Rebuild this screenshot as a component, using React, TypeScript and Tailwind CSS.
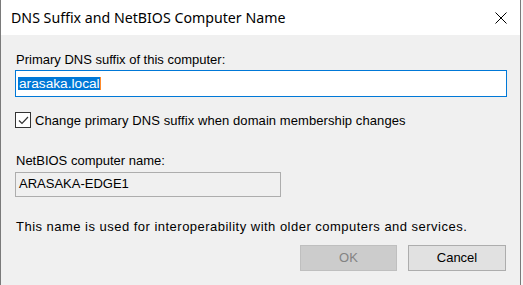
import React from "react"

const CloseIcon: React.FC = () => (
  <svg width="12" height="12" viewBox="0 0 12 12" className="block">
    <path d="M0.5 0.5 L11.5 11.5 M11.5 0.5 L0.5 11.5" stroke="#000" strokeWidth="1" fill="none" />
  </svg>
)

const CheckMark: React.FC = () => (
  <svg width="13" height="13" viewBox="0 0 13 13" className="block">
    <path d="M2 6.5 L5 9.5 L11 3" stroke="#333" strokeWidth="1.2" fill="none" />
  </svg>
)

export default function App() {
  return (
    <div className="w-[523px] h-[285px] bg-[#f7f7f7] overflow-hidden">
      <div
        className="w-[521px] h-[285px] flex flex-col border-x border-[#7a7a7a] text-black"
        style={{ fontFamily: '"Liberation Sans", Arial, sans-serif' }}
      >
        {/* title bar */}
        <div className="h-[35px] shrink-0 bg-white flex items-center justify-between pl-[10px] pr-[13px]">
          <span
            className="text-[14.2px] leading-[20px] text-black"
            style={{ fontFamily: '"Noto Sans", "Open Sans", sans-serif' }}
          >
            DNS Suffix and NetBIOS Computer Name
          </span>
          <CloseIcon />
        </div>

        {/* body */}
        <div className="flex-1 bg-[#f0f0f0] pl-[14px] pr-[13px] pt-[17px] flex flex-col text-[13px]">
          <div className="pl-[1px] leading-[15px]">Primary DNS suffix of this computer:</div>
          <div className="mt-[3px] h-[27px] border border-[#0078d7] bg-white flex items-center pl-[2px]">
            <span className="bg-[#0078d7] text-white leading-[13px] pl-[1px] text-[13.7px]">arasaka.local</span>
            <span className="w-[1px] h-[13px] bg-[#ff8a2a]" />
          </div>

          <div className="mt-[15px] flex items-center gap-[4px] h-[16px]">
            <div className="w-[16px] h-[16px] border border-[#333] bg-white flex items-center justify-center">
              <CheckMark />
            </div>
            <span className="leading-[15px] tracking-[0.08px]">
              Change primary DNS suffix when domain membership changes
            </span>
          </div>

          <div className="mt-[25px] pl-[1px] leading-[15px]">NetBIOS computer name:</div>
          <div className="mt-[4px] w-[266px] h-[25px] border border-[#adadad] bg-[#f0f0f0] flex items-center pl-[3px] pb-[2px]">
            ARASAKA-EDGE1
          </div>

          <div className="mt-[22px] pl-[1px] leading-[15px] tracking-[0.48px]">
            This name is used for interoperability with older computers and services.
          </div>

          <div className="mt-[11px] flex justify-end gap-[11px] pr-[1px]">
            <div className="w-[97px] h-[26px] border border-[#bfbfbf] bg-[#cccccc] text-[#838383] flex items-center justify-center">
              OK
            </div>
            <div className="w-[98px] h-[26px] border border-[#adadad] bg-[#e1e1e1] flex items-center justify-center">
              Cancel
            </div>
          </div>
        </div>
      </div>
    </div>
  )
}
